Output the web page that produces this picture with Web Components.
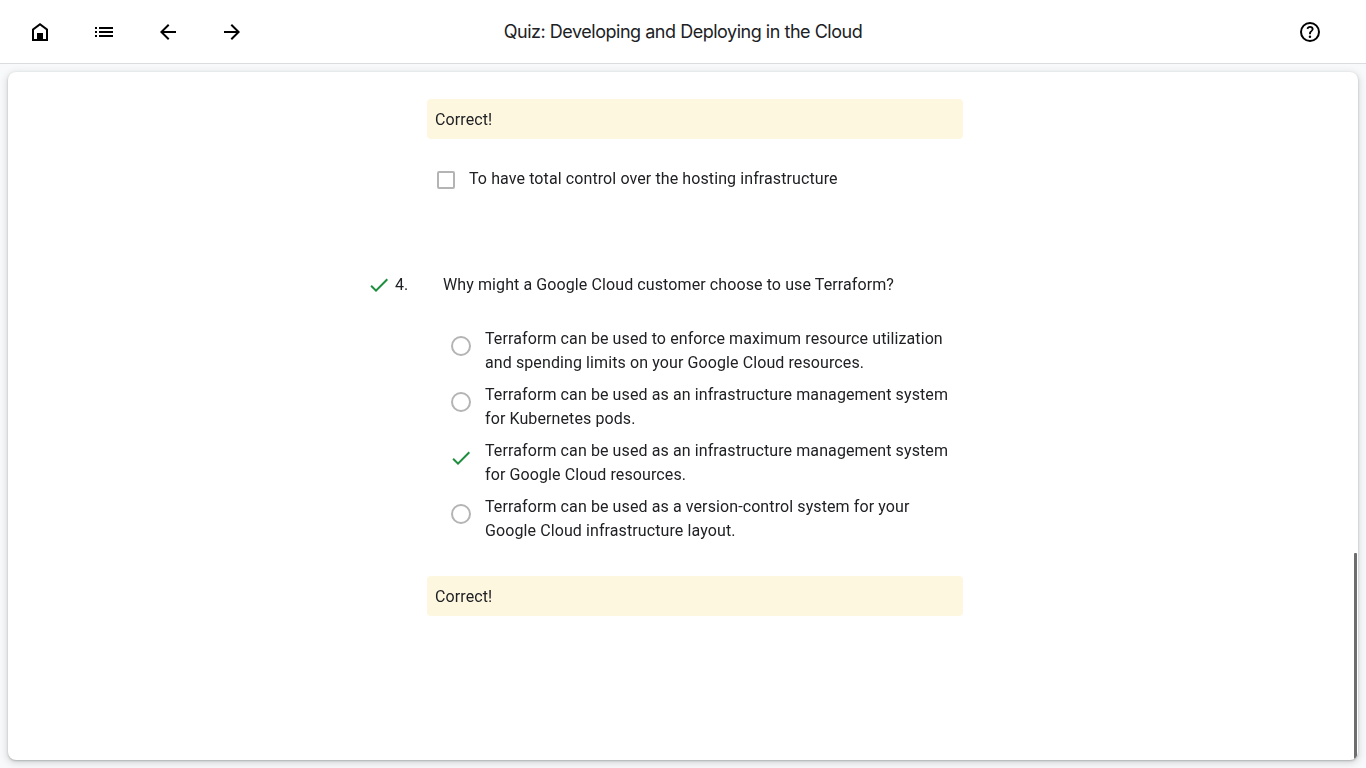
<!DOCTYPE html>
<html lang="en">
<head>
<meta charset="utf-8">
<title>Quiz: Developing and Deploying in the Cloud</title>
<style>
html,body{height:100%;margin:0}
body{font:16px/24px Roboto,sans-serif;letter-spacing:.1px;color:#202124;background:#f8f9fa;overflow:hidden}
</style>
</head>
<body>
<quiz-page></quiz-page>
<script>
const define = (name, html) => customElements.define(name, class extends HTMLElement {
  constructor() {
    super();
    this.attachShadow({mode: 'open'}).innerHTML = html;
  }
});

const icons = {
  home: 'M4 21V9l8-6 8 6v12zM6 19h3v-6h6v6h3v-9l-6-4.5L6 10zM9 13h6v7H9z',
  list: 'M7 9V7h14v2zm0 4v-2h14v2zm0 4v-2h14v2zM3 7h2v2H3zm0 4h2v2H3zm0 4h2v2H3z',
  back: 'M7.825 13l5.6 5.6L12 20l-8-8 8-8 1.425 1.4-5.6 5.6H20v2z',
  forward: 'M16.175 13H4v-2h12.175l-5.6-5.6L12 4l8 8-8 8-1.425-1.4z',
  help: 'M11.95 18a1.25 1.25 0 1 0 0-2.5 1.25 1.25 0 0 0 0 2.5zm-.9-3.85h1.85q0-.825.188-1.3.187-.475 1.062-1.3.65-.65 1.025-1.238.375-.587.375-1.412 0-1.4-1.025-2.15T12.1 6q-1.425 0-2.312.75-.888.75-1.238 1.8l1.65.65q.125-.45.563-.975Q11.2 7.7 12.1 7.7q.8 0 1.2.438.4.437.4.962 0 .5-.3.938-.3.437-.75.812-1.1.975-1.35 1.475t-.25 1.825zM12 22a10 10 0 1 1 0-20 10 10 0 0 1 0 20zm0-2a8 8 0 1 0 0-16 8 8 0 0 0 0 16z',
  check: 'M9 16.17L4.83 12l-1.42 1.41L9 19 21 7l-1.41-1.41z'
};
customElements.define('ui-icon', class extends HTMLElement {
  connectedCallback() {
    this.attachShadow({mode: 'open'}).innerHTML = `
      <style>:host{display:block;width:24px;height:24px}svg{display:block;width:100%;height:100%;fill:currentColor}</style>
      <svg viewBox="0 0 24 24"><path d="${icons[this.getAttribute('name')]}"/></svg>`;
  }
});

define('nav-bar', `
  <style>
    :host{display:grid;grid-template-columns:1fr auto 1fr;align-items:center;height:63px;padding:0 28px;background:#fff;border-bottom:1px solid #dadce0;color:#000}
    .nav{display:flex;gap:40px;padding-top:1px}
    h1{margin:0;font:400 18px/24px "Google Sans",Inter,sans-serif;letter-spacing:-.48px;color:#202124;white-space:nowrap}
    .end{display:flex;justify-content:flex-end;padding:1px 16px 0 0}
  </style>
  <div class="nav"><ui-icon name="home"></ui-icon><ui-icon name="list"></ui-icon><ui-icon name="back"></ui-icon><ui-icon name="forward"></ui-icon></div>
  <h1><slot></slot></h1>
  <div class="end"><ui-icon name="help"></ui-icon></div>`);

define('feedback-note', `
  <style>:host{display:block;box-sizing:border-box;height:40px;width:536px;padding:9px 8px 7px;border-radius:4px;background:#fef7e0}</style>
  <slot></slot>`);

define('check-option', `
  <style>
    :host{display:flex;gap:14px;padding-left:10px}
    i{box-sizing:border-box;flex:none;width:18px;height:18px;margin-top:4px;border:2px solid #b4b4b4;border-radius:2px}
  </style>
  <i></i><span><slot></slot></span>`);

define('radio-option', `
  <style>
    :host{display:flex;gap:14px}
    .mark{flex:none;box-sizing:border-box;width:20px;height:20px;margin-top:9px;border:2px solid #b4b4b4;border-radius:50%}
    ui-icon{display:none;flex:none;margin:7px -2px 0;color:#1e8e3e}
    :host([correct]) .mark{display:none}
    :host([correct]) ui-icon{display:block}
  </style>
  <div class="mark"></div><ui-icon name="check"></ui-icon><span><slot></slot></span>`);

define('quiz-question', `
  <style>
    :host{display:block}
    .head{display:flex;align-items:center}
    ui-icon{margin-right:4px;color:#1e8e3e}
    .num{width:48px}
    .options{display:grid;gap:8px;width:510px;padding:30px 0 33px 84px}
    .note{padding-left:60px}
  </style>
  <div class="head"><ui-icon name="check"></ui-icon><span class="num"><slot name="number"></slot></span><slot name="prompt"></slot></div>
  <div class="options"><slot></slot></div>
  <div class="note"><slot name="feedback"></slot></div>`);

define('quiz-card', `
  <style>
    :host{display:flex;box-sizing:border-box;margin:8px;height:688px;border-radius:8px;background:#fff;overflow:hidden;box-shadow:0 1px 2px rgba(60,64,67,.3),0 2px 6px 2px rgba(60,64,67,.15)}
    main{flex:1;padding:27px 0 0 359px;will-change:transform}
    .thumb{width:3px;height:206px;margin:481px 1px 0 0;border-radius:1px;background:#6e6e6e}
  </style>
  <main><slot></slot></main><div class="thumb"></div>`);

define('quiz-page', `
  <style>
    :host{display:block}
    .previous{padding:0 0 82px 60px}
    check-option{margin-top:28px}
  </style>
  <nav-bar>Quiz: Developing and Deploying in the Cloud</nav-bar>
  <quiz-card>
    <div class="previous">
      <feedback-note>Correct!</feedback-note>
      <check-option>To have total control over the hosting infrastructure</check-option>
    </div>
    <quiz-question>
      <span slot="number">4.</span>
      <span slot="prompt">Why might a Google Cloud customer choose to use Terraform?</span>
      <radio-option>Terraform can be used to enforce maximum resource utilization<br>and spending limits on your Google Cloud resources.</radio-option>
      <radio-option>Terraform can be used as an infrastructure management system<br>for Kubernetes pods.</radio-option>
      <radio-option correct>Terraform can be used as an infrastructure management system<br>for Google Cloud resources.</radio-option>
      <radio-option>Terraform can be used as a version-control system for your<br>Google Cloud infrastructure layout.</radio-option>
      <feedback-note slot="feedback">Correct!</feedback-note>
    </quiz-question>
  </quiz-card>`);
</script>
</body>
</html>
